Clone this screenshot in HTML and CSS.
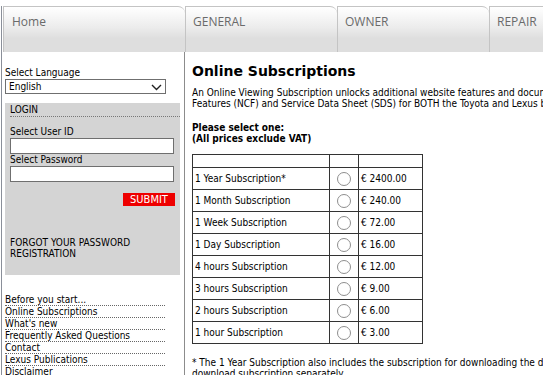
FILE: index.html
```html
<!DOCTYPE html>
<html lang="en">
<head>
  <meta charset="UTF-8">
  <title>Online Subscriptions</title>
  <link rel="stylesheet" href="styles.css">
</head>
<body>

<div class="pagina">

  <!-- Tabs -->
  <ul class="tabs">
    <li class="tab tab-home">Home</li>
    <li class="tab">GENERAL</li>
    <li class="tab">OWNER</li>
    <li class="tab">REPAIR</li>
    <li class="tab">BODY</li>
  </ul>

  <div class="govde">

    <!-- Sidebar -->
    <div class="yan">
      <div class="etiket">Select Language</div>
      <div class="dil-kutu">
        <select class="dil">
          <option>English</option>
        </select>
        <svg class="ok" width="11" height="7" viewBox="0 0 11 7"><path d="M1 1 L5.5 5.5 L10 1" fill="none" stroke="#222" stroke-width="1.4"/></svg>
      </div>

      <div class="giris">
        <div class="giris-baslik">LOGIN</div>
        <div class="etiket">Select User ID</div>
        <input type="text" class="alan">
        <div class="etiket">Select Password</div>
        <input type="password" class="alan">
        <div class="buton-satir">
          <span class="gonder">SUBMIT</span>
        </div>
        <div class="giris-link">FORGOT YOUR PASSWORD</div>
        <div class="giris-link">REGISTRATION</div>
      </div>

      <ul class="menu">
        <li>Before you start...</li>
        <li>Online Subscriptions</li>
        <li>What's new</li>
        <li>Frequently Asked Questions</li>
        <li>Contact</li>
        <li>Lexus Publications</li>
        <li>Disclaimer</li>
      </ul>
    </div>

    <!-- Main -->
    <div class="icerik">
      <h1>Online Subscriptions</h1>
      <p class="aciklama">An Online Viewing Subscription unlocks additional website features and documents such as New Car<br>
      Features (NCF) and Service Data Sheet (SDS) for BOTH the Toyota and Lexus brands.</p>

      <p class="secim">Please select one:<br>(All prices exclude VAT)</p>

      <table class="fiyatlar">
        <tr class="bos"><td></td><td></td><td></td></tr>
        <tr><td>1 Year Subscription*</td><td class="radyo"><input type="radio" name="abone"></td><td>€ 2400.00</td></tr>
        <tr><td>1 Month Subscription</td><td class="radyo"><input type="radio" name="abone"></td><td>€ 240.00</td></tr>
        <tr><td>1 Week Subscription</td><td class="radyo"><input type="radio" name="abone"></td><td>€ 72.00</td></tr>
        <tr><td>1 Day Subscription</td><td class="radyo"><input type="radio" name="abone"></td><td>€ 16.00</td></tr>
        <tr><td>4 hours Subscription</td><td class="radyo"><input type="radio" name="abone"></td><td>€ 12.00</td></tr>
        <tr><td>3 hours Subscription</td><td class="radyo"><input type="radio" name="abone"></td><td>€ 9.00</td></tr>
        <tr><td>2 hours Subscription</td><td class="radyo"><input type="radio" name="abone"></td><td>€ 6.00</td></tr>
        <tr><td>1 hour Subscription</td><td class="radyo"><input type="radio" name="abone"></td><td>€ 3.00</td></tr>
      </table>

      <p class="dipnot">* The 1 Year Subscription also includes the subscription for downloading the documents, so you don't need to buy a<br>
      download subscription separately.</p>
    </div>

  </div>
</div>

</body>
</html>
```

FILE: styles.css
```css
html, body {
  margin: 0;
  overflow: hidden;
  background: #fff;
}

body {
  font-family: "DejaVu Sans Condensed", "DejaVu Sans", Tahoma, sans-serif;
  font-size: 10px;
  color: #000;
}

.pagina {
  width: 1000px;
  min-height: 375px;
  margin-left: 1px;
  border-left: 1px solid #8a8f99;
}

/* tabs */
.tabs {
  list-style: none;
  margin: 6px 0 0 1px;
  padding: 0;
  display: flex;
  height: 46px;
}

.tab {
  width: 152px;
  border-top: 1px solid #c4c4c4;
  border-left: 1px solid #c4c4c4;
  border-top-right-radius: 7px;
  background: linear-gradient(#ffffff 0%, #ececec 45%, #dedede 70%, #dedede 100%);
  font-family: "Open Sans", sans-serif;
  font-size: 12px;
  color: #6a6a6a;
  padding: 6px 0 0 7px;
  box-sizing: border-box;
}

.tab-home {
  width: 182px;
  padding-left: 8px;
}

/* body */
.govde {
  display: flex;
  align-items: flex-start;
}

.yan {
  width: 182px;
  margin-left: 1px;
  border-right: 1px solid #8c8c8c;
  padding: 15px 0 0 2px;
  box-sizing: border-box;
  min-height: 330px;
}

.etiket {
  line-height: 12px;
}

.dil-kutu {
  position: relative;
  width: 161px;
}

.dil {
  -webkit-appearance: none;
  appearance: none;
  width: 161px;
  height: 15px;
  border: 1px solid #6f6f6f;
  border-radius: 0;
  background: #fff;
  font-family: inherit;
  font-size: 10px;
  padding: 0 0 0 3px;
  margin: 0;
  display: block;
  color: #000;
}

.ok {
  position: absolute;
  right: 4px;
  top: 5px;
}

.giris {
  margin-top: 9px;
  width: 175px;
  background: #d4d4d4;
  padding: 1px 0 16px 5px;
  box-sizing: border-box;
}

.giris-baslik {
  line-height: 12px;
  border-bottom: 1px dotted #777;
  margin-bottom: 9px;
}

.alan {
  display: block;
  width: 164px;
  height: 16px;
  box-sizing: border-box;
  border: 1px solid #6f6f6f;
  margin: 0;
  padding: 0;
  background: #fff;
}

.buton-satir {
  display: flex;
  justify-content: flex-end;
  padding-right: 5px;
  margin-top: 11px;
}

.gonder {
  background: #ee0000;
  color: #fff;
  width: 52px;
  height: 13px;
  line-height: 13px;
  text-align: center;
  font-size: 11px;
}

.giris-link {
  line-height: 11px;
}

.buton-satir + .giris-link {
  margin-top: 31px;
}

.menu {
  list-style: none;
  margin: 19px 0 0;
  padding: 0;
  width: 160px;
}

.menu li {
  line-height: 11px;
  border-bottom: 1px dotted #666;
}

/* main */
.icerik {
  padding: 10px 0 0 7px;
}

h1 {
  font-family: "DejaVu Sans", Verdana, sans-serif;
  font-size: 14px;
  font-weight: bold;
  margin: 0;
  line-height: 18px;
}

.aciklama {
  margin: 7px 0 0;
  line-height: 11px;
  white-space: nowrap;
}

.secim {
  margin: 13px 0 0;
  font-weight: bold;
  line-height: 11px;
}

.fiyatlar {
  margin-top: 10px;
  border-collapse: collapse;
  border: 1px solid #333;
}

.fiyatlar td {
  border: 1px solid #333;
  height: 21px;
  padding: 0 0 0 2px;
  white-space: nowrap;
}

.fiyatlar td:nth-child(1) { width: 134px; }
.fiyatlar td:nth-child(2) { width: 28px; padding: 0; }
.fiyatlar td:nth-child(3) { width: 61px; }

.fiyatlar .bos td {
  height: 12px;
}

.radyo {
  text-align: center;
}

.radyo input {
  -webkit-appearance: none;
  appearance: none;
  width: 14px;
  height: 14px;
  margin: 0;
  vertical-align: middle;
  border: 1px solid #8e8e8e;
  border-radius: 50%;
  background: #fff;
}

.dipnot {
  margin: 13px 0 0;
  line-height: 11px;
  white-space: nowrap;
}
```
